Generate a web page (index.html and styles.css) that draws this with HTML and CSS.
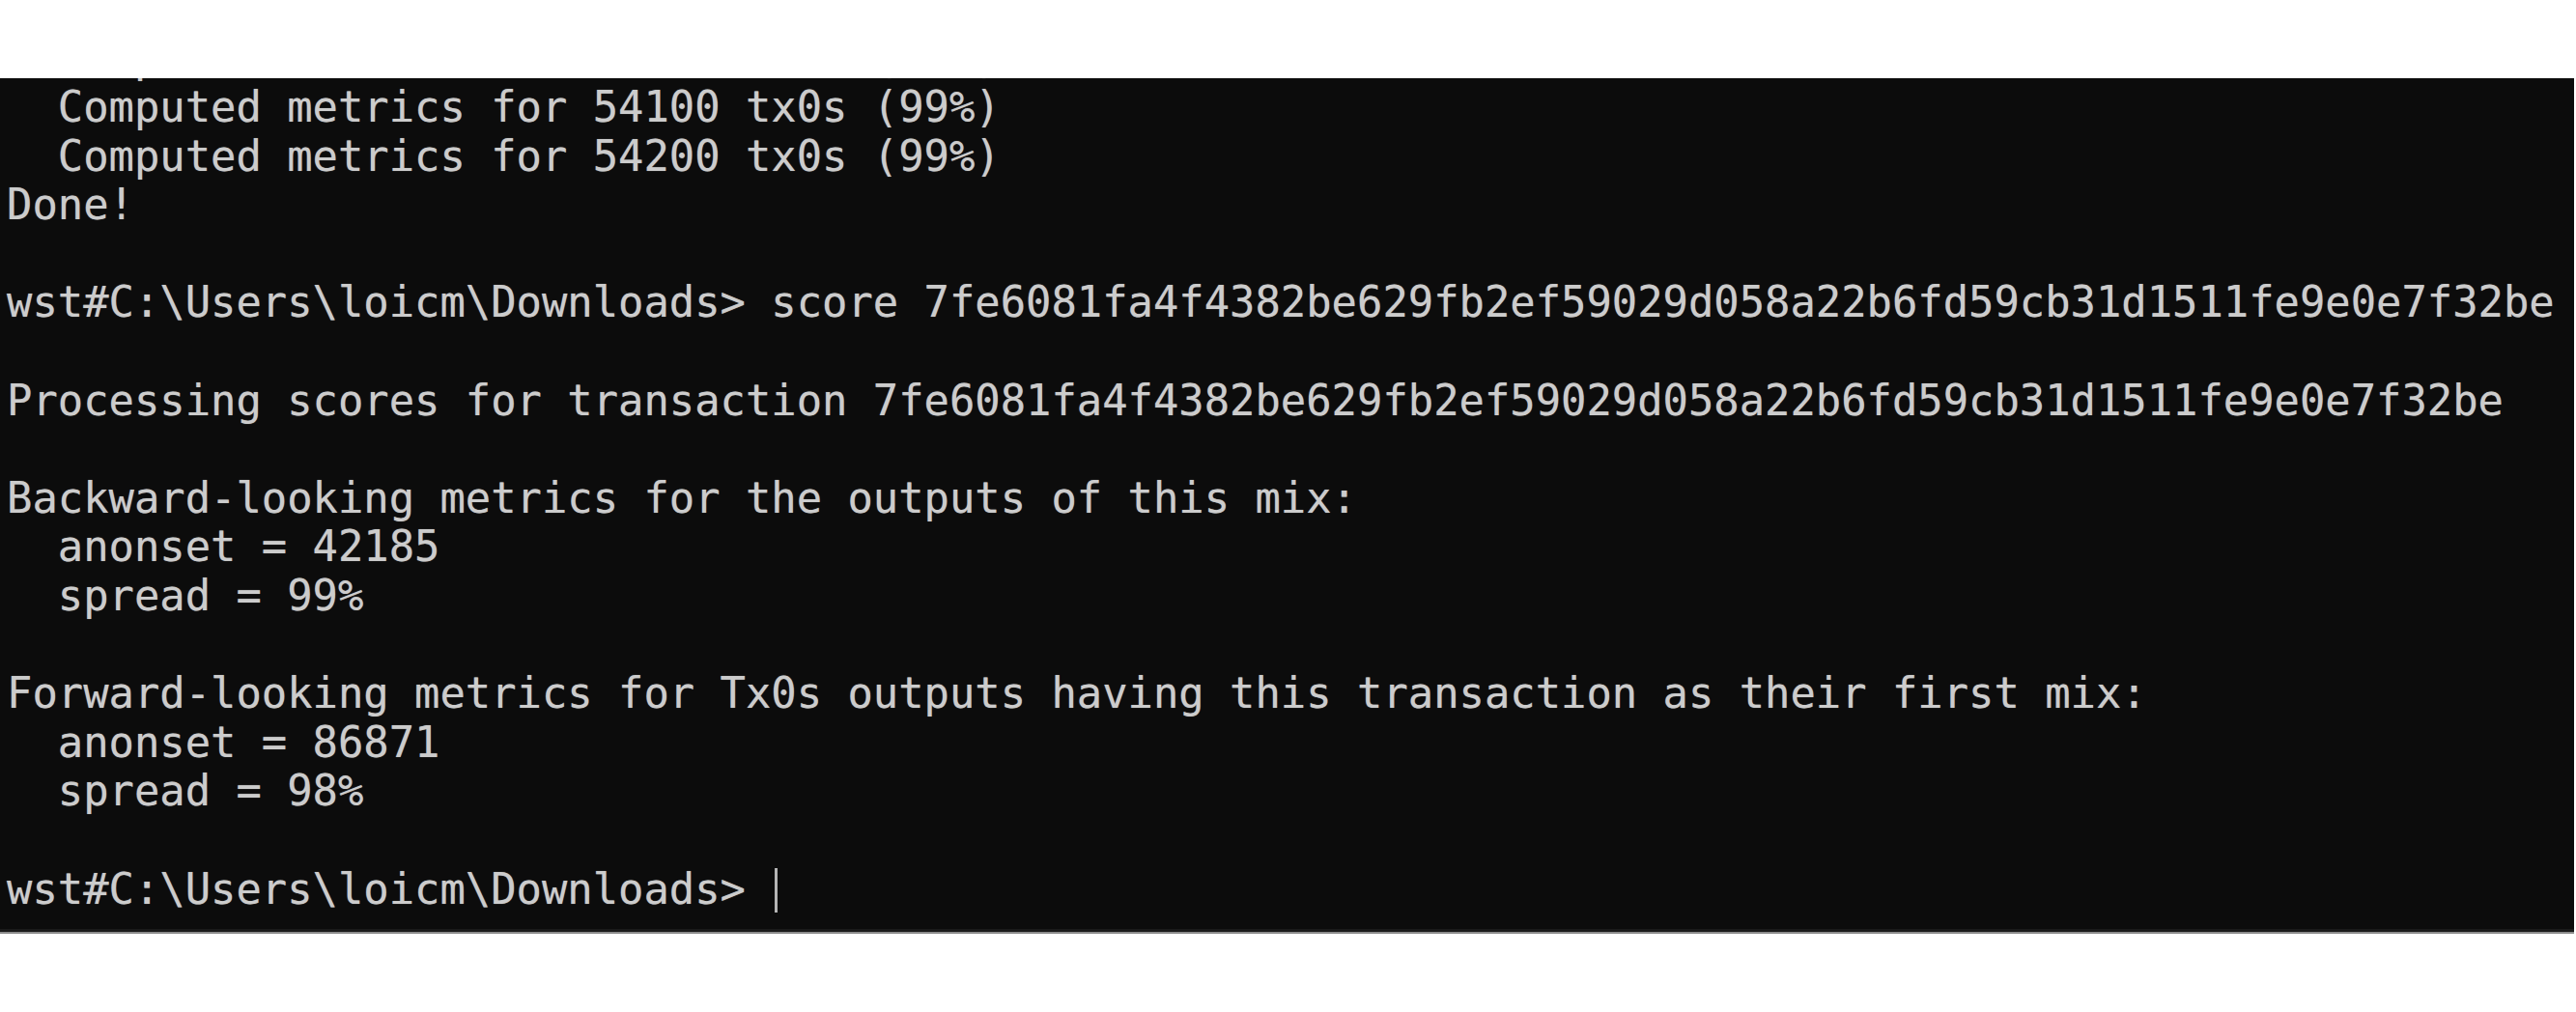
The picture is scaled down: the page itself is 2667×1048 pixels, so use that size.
FILE: index.html
```html
<!DOCTYPE html>
<html lang="en">
<head>
<meta charset="utf-8">
<title>Terminal</title>
<link rel="stylesheet" href="styles.css">
</head>
<body>
<div class="page">
  <div class="terminal">
<pre class="output">  Computed metrics for 54000 tx0s (99%)
  Computed metrics for 54100 tx0s (99%)
  Computed metrics for 54200 tx0s (99%)
Done!

wst#C:\Users\loicm\Downloads&gt; score 7fe6081fa4f4382be629fb2ef59029d058a22b6fd59cb31d1511fe9e0e7f32be

Processing scores for transaction 7fe6081fa4f4382be629fb2ef59029d058a22b6fd59cb31d1511fe9e0e7f32be

Backward-looking metrics for the outputs of this mix:
  anonset = 42185
  spread = 99%

Forward-looking metrics for Tx0s outputs having this transaction as their first mix:
  anonset = 86871
  spread = 98%

wst#C:\Users\loicm\Downloads&gt; <span class="cursor"></span></pre>
  </div>
  <div class="edge"></div>
</div>
</body>
</html>
```

FILE: styles.css
```css
html, body {
  margin: 0;
  padding: 0;
  background: #ffffff;
}

.page {
  padding-top: 81px;
}

.terminal {
  width: 2665px;
  height: 881px;
  background: #0c0c0c;
  overflow: hidden;
  border-bottom: 3px solid #1a1a1a;
}

.edge {
  width: 2665px;
  height: 2px;
  background: #8c8c8c;
}

.output {
  margin: -45.6px 0 0 0;
  padding-left: 7px;
  font-family: "DejaVu Sans Mono", "Liberation Mono", monospace;
  font-size: 43.82px;
  line-height: 50.6px;
  color: #cccccc;
  white-space: pre;
  text-shadow: 0 0 1px rgba(204, 204, 204, 0.6);
}

.cursor {
  display: inline-block;
  width: 3px;
  height: 46px;
  margin-left: 4px;
  background: #b5b5b5;
  vertical-align: -9px;
}
```
